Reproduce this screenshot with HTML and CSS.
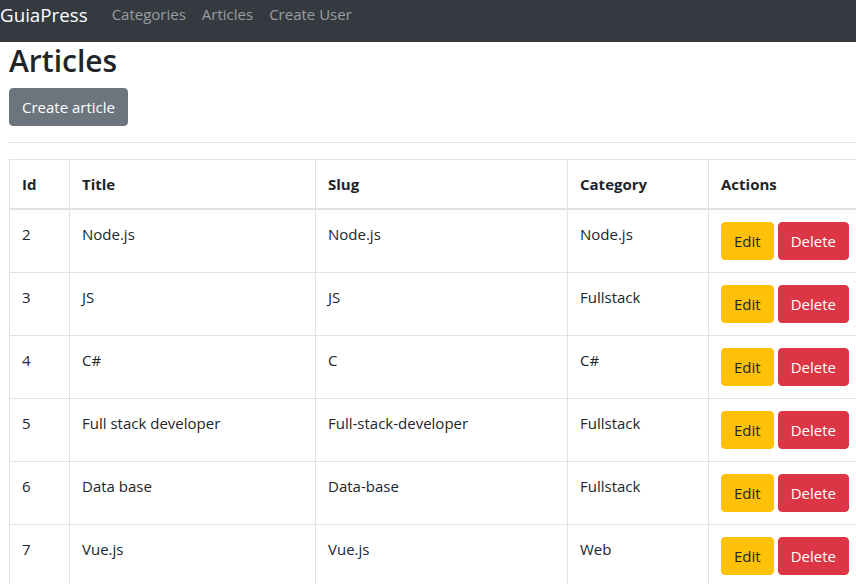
FILE: index.html
```html
<!DOCTYPE html>
<html lang="en">
<head>
<meta charset="utf-8">
<title>GuiaPress - Articles</title>
<link rel="stylesheet" href="styles.css">
</head>
<body>
<nav class="navbar">
  <a class="brand" href="#">GuiaPress</a>
  <a class="nav-link" href="#">Categories</a>
  <a class="nav-link" href="#">Articles</a>
  <a class="nav-link" href="#">Create User</a>
</nav>
<main class="page">
  <h2 class="title">Articles</h2>
  <a class="btn btn-secondary" href="#">Create article</a>
  <hr class="divider">
  <table class="table">
    <colgroup>
      <col class="c-id"><col class="c-title"><col class="c-slug"><col class="c-cat"><col class="c-act">
    </colgroup>
    <thead>
      <tr><th>Id</th><th>Title</th><th>Slug</th><th>Category</th><th>Actions</th></tr>
    </thead>
    <tbody>
      <tr><td>2</td><td>Node.js</td><td>Node.js</td><td>Node.js</td><td><div class="actions"><a class="btn btn-warning" href="#">Edit</a><a class="btn btn-danger" href="#">Delete</a></div></td></tr>
      <tr><td>3</td><td>JS</td><td>JS</td><td>Fullstack</td><td><div class="actions"><a class="btn btn-warning" href="#">Edit</a><a class="btn btn-danger" href="#">Delete</a></div></td></tr>
      <tr><td>4</td><td>C#</td><td>C</td><td>C#</td><td><div class="actions"><a class="btn btn-warning" href="#">Edit</a><a class="btn btn-danger" href="#">Delete</a></div></td></tr>
      <tr><td>5</td><td>Full stack developer</td><td>Full-stack-developer</td><td>Fullstack</td><td><div class="actions"><a class="btn btn-warning" href="#">Edit</a><a class="btn btn-danger" href="#">Delete</a></div></td></tr>
      <tr><td>6</td><td>Data base</td><td>Data-base</td><td>Fullstack</td><td><div class="actions"><a class="btn btn-warning" href="#">Edit</a><a class="btn btn-danger" href="#">Delete</a></div></td></tr>
      <tr><td>7</td><td>Vue.js</td><td>Vue.js</td><td>Web</td><td><div class="actions"><a class="btn btn-warning" href="#">Edit</a><a class="btn btn-danger" href="#">Delete</a></div></td></tr>
    </tbody>
  </table>
</main>
</body>
</html>
```

FILE: styles.css
```css
html {
  overflow: hidden;
}
body {
  margin: 0;
  font-family: "Open Sans", "Noto Sans", sans-serif;
  font-size: 15px;
  line-height: 24px;
  color: #212529;
  background: #fff;
}
a {
  text-decoration: none;
}
.navbar {
  display: flex;
  align-items: flex-start;
  height: 42px;
  background: #343a40;
}
.brand {
  color: #fff;
  font-size: 18.75px;
  line-height: 29px;
  margin-right: 16px;
}
.nav-link {
  color: rgba(255, 255, 255, 0.5);
  line-height: 29px;
  padding: 0 8px;
}
.page {
  padding-left: 9px;
}
.title {
  margin: 0 0 8px;
  font-size: 30px;
  line-height: 38px;
  font-weight: 600;
}
.btn {
  display: inline-block;
  box-sizing: border-box;
  height: 38px;
  padding: 6px 12px;
  border: 1px solid transparent;
  border-radius: 4px;
  line-height: 24px;
  font-size: 15px;
}
.btn-secondary {
  background: #6c757d;
  border-color: #6c757d;
  color: #fff;
}
.btn-warning {
  background: #ffc107;
  border-color: #ffc107;
  color: #212529;
}
.btn-danger {
  background: #dc3545;
  border-color: #dc3545;
  color: #fff;
}
.divider {
  margin: 16px 0;
  border: 0;
  border-top: 1px solid rgba(0, 0, 0, 0.1);
}
.table {
  border-collapse: collapse;
  table-layout: fixed;
  width: 854px;
}
.c-id { width: 60px; }
.c-title { width: 246px; }
.c-slug { width: 252px; }
.c-cat { width: 141px; }
.c-act { width: 155px; }
.table th,
.table td {
  padding: 12px;
  border: 1px solid #dee2e6;
  vertical-align: top;
  text-align: left;
}
.table th {
  font-weight: 700;
}
.table thead th {
  border-bottom: 2px solid #dee2e6;
}
.actions {
  display: flex;
  gap: 4px;
}
```
